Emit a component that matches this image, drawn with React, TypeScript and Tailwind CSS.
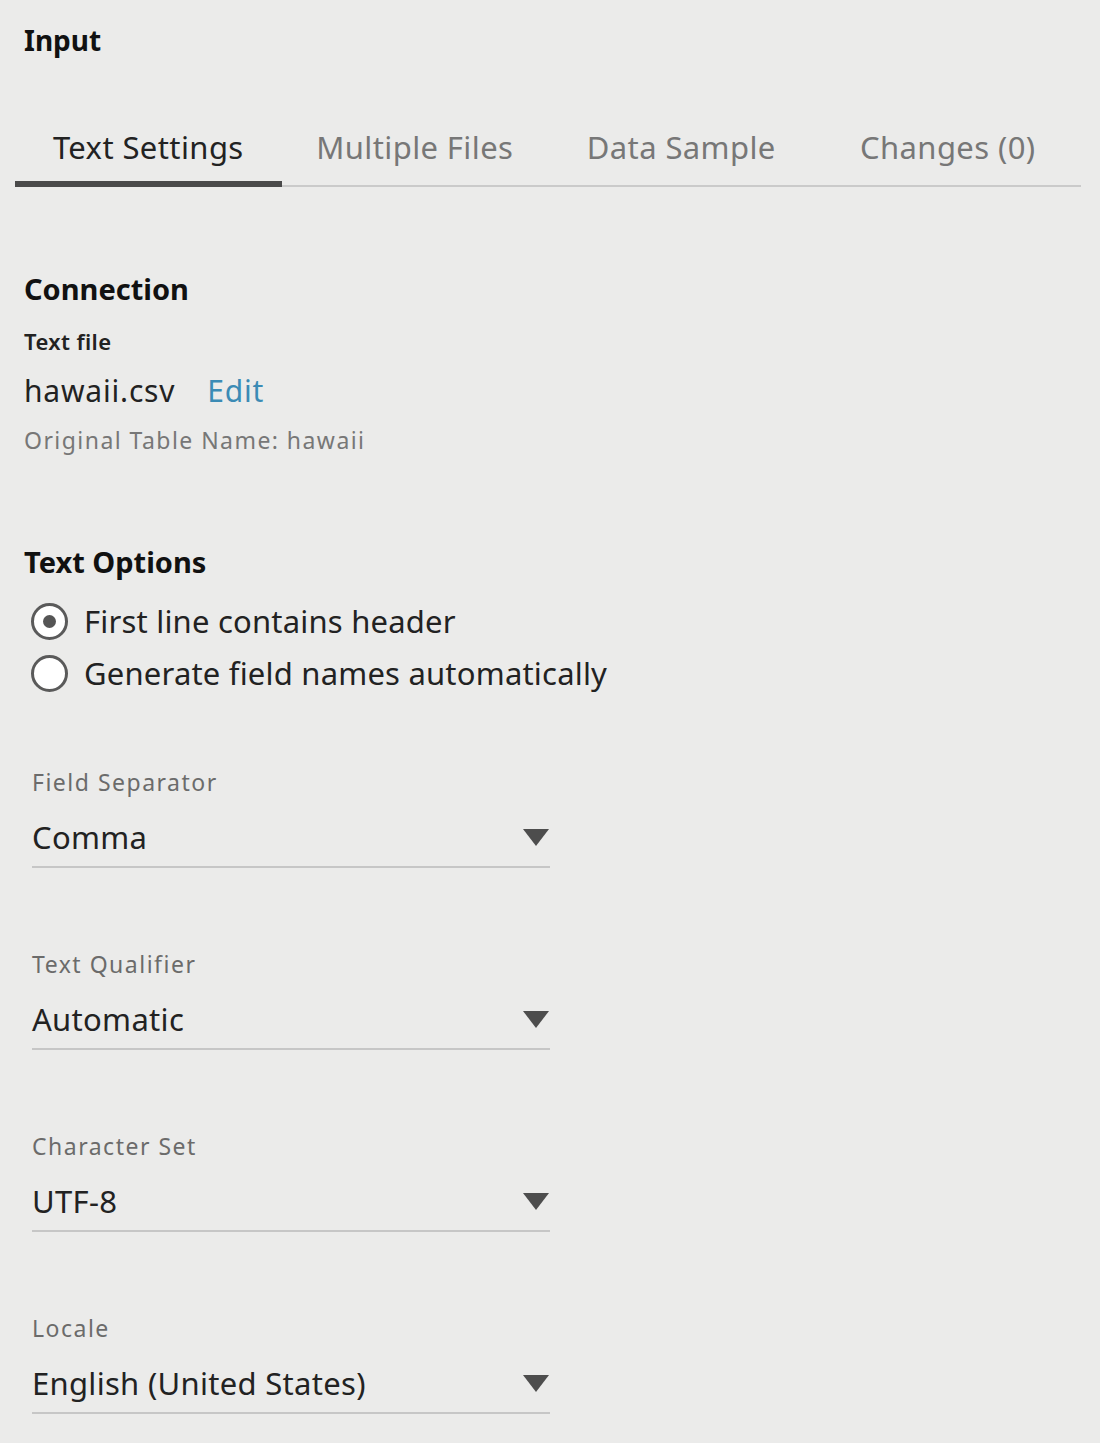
import React, { useState } from 'react';

const FONT = 'font-["Noto_Sans","Open_Sans",sans-serif]';

const tabs = ['Text Settings', 'Multiple Files', 'Data Sample', 'Changes (0)'];

const fields = [
  { label: 'Field Separator', value: 'Comma' },
  { label: 'Text Qualifier', value: 'Automatic' },
  { label: 'Character Set', value: 'UTF-8' },
  { label: 'Locale', value: 'English (United States)' },
];

const Radio: React.FC<{ checked: boolean; label: string; onClick: () => void }> = ({ checked, label, onClick }) => (
  <div className="flex items-center h-[52px] cursor-pointer" onClick={onClick}>
    <div className="w-[37px] h-[37px] rounded-full border-[3px] border-[#5a5a5a] bg-white flex items-center justify-center">
      {checked && <div className="w-[13px] h-[13px] rounded-full bg-[#555]" />}
    </div>
    <span className="ml-[16px] text-[31px] tracking-[0.2px] text-[#222] leading-none">{label}</span>
  </div>
);

const Dropdown: React.FC<{ label: string; value: string }> = ({ label, value }) => (
  <div className="w-[518px] ml-[8px]">
    <div className="text-[23px] tracking-[1.5px] leading-none text-[#6b6b6b]">{label}</div>
    <div className="flex items-center justify-between h-[56px] mt-[18px] border-b-2 border-[#c6c6c6]">
      <span className="text-[31px] tracking-[0.3px] text-[#222] leading-none -mt-[3px]">{value}</span>
      <svg width="26" height="19" viewBox="0 0 26 19" className="mr-[1px] -mt-[4px]">
        <polygon points="0,1 26,1 13,18" fill="#4d4d4d" />
      </svg>
    </div>
  </div>
);

export default function App() {
  const [active, setActive] = useState(0);
  const [header, setHeader] = useState(true);

  return (
    <div className={`${FONT} bg-[#ebebea] w-[1100px] h-[1443px] overflow-hidden`}>
      <div className="pl-[24px] pt-[26px] text-[28px] font-bold text-[#111] leading-none">Input</div>

      <div className="mx-[15px] w-[1066px] mt-[72px] flex border-b-2 border-[#cacaca]">
        {tabs.map((t, i) => (
          <button
            key={t}
            onClick={() => setActive(i)}
            className={`flex-1 h-[61px] text-[31px] tracking-[0.4px] leading-none pb-[13px] -mb-[2px] ${
              i === active ? 'text-[#222] border-b-[6px] border-[#4a4a4a]' : 'text-[#777] border-b-[6px] border-transparent'
            }`}
          >
            {t}
          </button>
        ))}
      </div>

      <div className="pl-[24px]">
        <div className="mt-[87px] text-[29px] font-bold text-[#111] leading-none">Connection</div>
        <div className="mt-[27px] text-[22px] tracking-[0.4px] font-semibold text-[#222] leading-none">Text file</div>
        <div className="mt-[24px] flex items-baseline text-[30px] tracking-[0.8px] leading-none">
          <span className="text-[#222]">hawaii.csv</span>
          <span className="ml-[32px] text-[#3b8bb5]">Edit</span>
        </div>
        <div className="mt-[23px] text-[23px] tracking-[1.45px] text-[#777] leading-none">Original Table Name: hawaii</div>

        <div className="mt-[95px] text-[29px] font-bold text-[#111] leading-none">Text Options</div>
        <div className="mt-[19px] ml-[7px]">
          <Radio checked={header} label="First line contains header" onClick={() => setHeader(true)} />
          <Radio checked={!header} label="Generate field names automatically" onClick={() => setHeader(false)} />
        </div>

        <div className="mt-[72px] flex flex-col gap-[85px]">
          {fields.map(f => (
            <Dropdown key={f.label} label={f.label} value={f.value} />
          ))}
        </div>
      </div>
    </div>
  );
}
